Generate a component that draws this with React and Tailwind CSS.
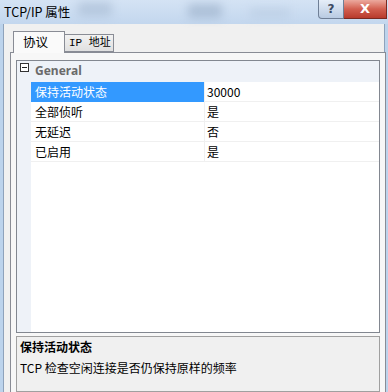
import React from 'react';

const cjk = { fontFamily: '"Noto Sans CJK SC", "Noto Sans", sans-serif' };

const rows = [
    { name: '保持活动状态', value: '30000', selected: true },
    { name: '全部侦听', value: '是' },
    { name: '无延迟', value: '否' },
    { name: '已启用', value: '是' },
];

function TitleBar() {
    return (
        <div className="relative shrink-0 h-[24px] flex items-start bg-gradient-to-b from-[#d4e3f4] to-[#c3d7ee]">
            {/* blurred glass behind */}
            <div className="absolute left-[78px] top-[2px] w-[34px] h-[14px] bg-[#9fb3cc] opacity-50 blur-[5px]" />
            <div className="absolute left-[188px] top-[4px] w-[34px] h-[14px] bg-[#8ea4bf] opacity-50 blur-[5px]" />
            <div className="absolute left-[250px] top-[8px] w-[40px] h-[10px] bg-[#b4c7de] opacity-50 blur-[5px]" />
            <span className="relative pl-[4px] pt-[4px] text-[12.5px] leading-[16px] text-black whitespace-nowrap" style={cjk}>
                TCP/IP 属性
            </span>
            <div className="ml-auto relative flex mr-[1px]">
                <div className="w-[26px] h-[19px] rounded-bl-[4px] border border-t-0 border-[#6f7f96] bg-gradient-to-b from-[#e6eef8] to-[#b9cbe2] flex items-center justify-center text-[12px] font-bold text-[#3b4a62]" style={{ fontFamily: '"DejaVu Sans", sans-serif' }}>
                    ?
                </div>
                <div className="w-[43px] h-[19px] border border-t-0 border-l-0 border-[#7a2a22] bg-gradient-to-b from-[#eba99e] via-[#d25f50] to-[#b83a2c] flex items-center justify-center text-[13px] font-bold text-white" style={{ fontFamily: '"DejaVu Sans", sans-serif' }}>
                    X
                </div>
            </div>
        </div>
    );
}

function Tabs() {
    return (
        <div className="shrink-0 flex items-end pl-[10px] pt-[6px] h-[28px]">
            <div className="relative z-10 -mb-px h-[22px] w-[52px] border border-b-0 border-[#898c95] bg-[#fafafa] text-[12.5px] text-black pl-[9px] pt-[2px] leading-[16px]" style={cjk}>
                协议
            </div>
            <div className="h-[18px] w-[49px] border border-l-0 border-[#898c95] bg-gradient-to-b from-[#f2f2f2] to-[#e0e0e0] text-[11px] leading-[16px] pl-[4px] text-black whitespace-nowrap" style={{ fontFamily: '"Liberation Mono", "Noto Sans CJK SC", monospace' }}>
                IP 地址
            </div>
        </div>
    );
}

function PropertyGrid() {
    return (
        <div className="shrink-0 h-[273px] border border-[#828790] bg-white flex flex-col" style={cjk}>
            <div className="flex h-[21px] bg-[#eef2f8]">
                <div className="w-[14px] flex items-start justify-center pt-[2px]">
                    <div className="w-[9px] h-[9px] border border-[#333] bg-white flex items-center justify-center">
                        <div className="w-[5px] h-px bg-[#222]" />
                    </div>
                </div>
                <span className="pl-[4px] pt-[2px] text-[12px] leading-[16px] font-bold text-[#6a6a6a]" style={{ fontFamily: '"Noto Sans", sans-serif' }}>
                    General
                </span>
            </div>
            {rows.map((r) => (
                <div key={r.name} className="flex h-[20px]">
                    <div className="w-[14px] bg-[#eef2f8]" />
                    <div className={`w-[173px] pl-[4px] text-[12px] leading-[19px] border-b ${r.selected ? 'bg-[#3399ff] text-white border-[#3399ff]' : 'text-black border-[#f0f0f0]'}`}>
                        {r.name}
                    </div>
                    <div className="flex-1 pl-[2px] text-[12px] leading-[19px] text-black border-b border-l border-[#f0f0f0]">
                        {r.value}
                    </div>
                </div>
            ))}
            <div className="flex flex-1">
                <div className="w-[14px] bg-[#eef2f8]" />
            </div>
        </div>
    );
}

export default function App() {
    return (
        <div className="w-[388px] h-[392px] overflow-hidden flex flex-col bg-[#c9dcf0]">
            <TitleBar />
            <div className="flex-1 min-h-0 flex border-l-[3px] border-r-[3px] border-[#bcd3ec]">
                <div className="flex-1 flex flex-col bg-[#f0f0f0] border-l border-r border-[#8ea2bb]">
                    <div className="-ml-px shrink-0">
                        <Tabs />
                    </div>
                    <div className="ml-[6px] mr-[-2px] flex-1 min-h-0 border border-b-0 border-[#898c95] bg-[#f7f7f7] pl-[5px] pr-[5px] pt-[7px] flex flex-col gap-[3px]">
                        <PropertyGrid />
                        <div className="shrink-0 h-[56px] border border-[#a0a0a0] bg-[#f0f0f0] pl-[3px] pt-[2px]" style={cjk}>
                            <div className="text-[12px] leading-[16px] font-bold text-black">保持活动状态</div>
                            <div className="mt-[5px] text-[12px] leading-[16px] text-black">TCP 检查空闲连接是否仍保持原样的频率</div>
                        </div>
                    </div>
                </div>
            </div>
        </div>
    );
}
